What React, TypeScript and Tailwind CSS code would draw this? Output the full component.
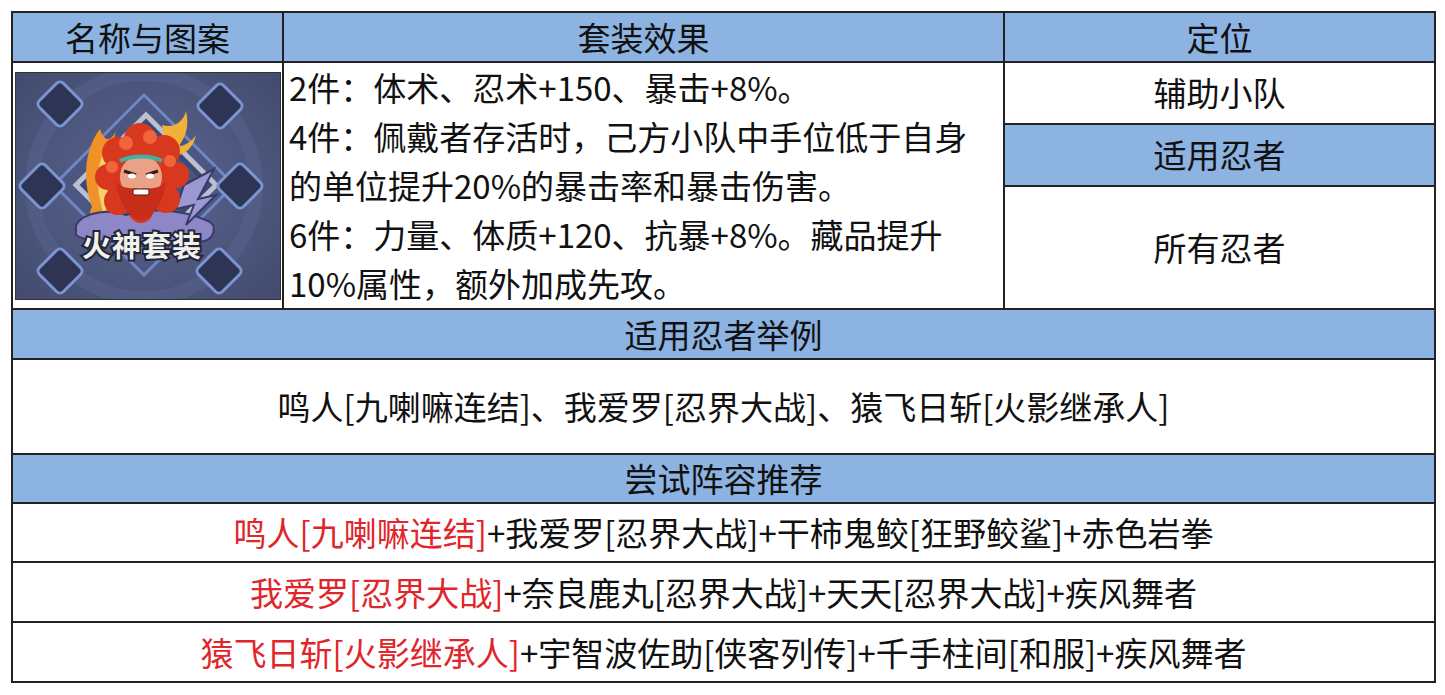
import React from "react";

const Emblem = () => {
  const small = [
    [44, 31],
    [204, 33],
    [26, 113],
    [224, 113],
    [44, 198],
    [203, 198],
  ];
  return (
    <svg width="264" height="226" viewBox="0 0 264 226" className="block">
      <defs>
        <radialGradient id="bg" cx="50%" cy="50%" r="70%">
          <stop offset="0%" stopColor="#5a6590" />
          <stop offset="100%" stopColor="#434b6e" />
        </radialGradient>
      </defs>
      <rect x="0" y="0" width="264" height="226" fill="url(#bg)" />
      <circle cx="128" cy="113" r="112" fill="none" stroke="#56618a" strokeWidth="14" opacity="0.6" />
      <path d="M128 22 L218 112 L128 202 L38 112 Z" fill="#4c5781" stroke="#6f86c4" strokeWidth="3" />
      <path d="M130 42 L200 112 L130 182 L60 112 Z" fill="#3f4870" stroke="#b9c0d2" strokeWidth="5" />
      <path d="M130 52 L190 112 L130 172 L70 112 Z" fill="#4d5679" />
      {small.map(([x, y], i) => (
        <rect
          key={i}
          x={x - 17}
          y={y - 17}
          width="34"
          height="34"
          rx="5"
          transform={`rotate(45 ${x} ${y})`}
          fill="#2e3453"
          stroke="#7b94d2"
          strokeWidth="3"
        />
      ))}
      {/* flames */}
      <path d="M84 56 C66 80 68 112 76 134 C70 144 76 156 90 164 C86 144 98 132 94 112 C102 96 94 78 100 58 C94 70 88 68 84 56 Z" fill="#f0912a" />
      <path d="M88 78 C78 100 82 122 88 142 C92 126 102 110 98 96 C102 88 100 80 96 72 Z" fill="#f6d36a" />
      <path d="M146 52 C158 56 168 48 170 38 C174 56 168 66 162 74 C170 72 176 68 180 62 C176 80 162 86 150 80 Z" fill="#f2b23a" />
      {/* lower cloud */}
      <path d="M60 152 C68 138 96 136 110 142 C130 136 160 134 192 148 C202 152 198 166 188 168 C160 172 130 170 110 168 C90 170 68 168 60 162 Z" fill="#8d87c8" stroke="#3b3a66" strokeWidth="2" />
      <path d="M168 112 L198 96 L182 126 L200 122 L170 152 L178 132 L160 136 Z" fill="#9b98d4" stroke="#3b3a66" strokeWidth="2" />
      {/* hair */}
      <g fill="#d8391e">
        <circle cx="125" cy="102" r="37" />
        <circle cx="102" cy="80" r="16" />
        <circle cx="124" cy="66" r="16" />
        <circle cx="148" cy="78" r="16" />
        <circle cx="160" cy="102" r="13" />
        <circle cx="92" cy="104" r="13" />
        <circle cx="102" cy="128" r="14" />
        <circle cx="150" cy="126" r="14" />
        <circle cx="125" cy="138" r="12" />
      </g>
      <g fill="#f0653a">
        <circle cx="110" cy="70" r="7" />
        <circle cx="134" cy="64" r="7" />
        <circle cx="154" cy="88" r="6" />
        <circle cx="96" cy="94" r="6" />
      </g>
      {/* face */}
      <ellipse cx="125" cy="104" rx="21" ry="22" fill="#e9a287" />
      <path d="M104 88 C115 82 135 82 146 88" stroke="#3fb0a4" strokeWidth="4" fill="none" />
      <path d="M108 98 L120 102 M142 98 L130 102" stroke="#3a1a10" strokeWidth="3" />
      <ellipse cx="116" cy="103" rx="4" ry="2.5" fill="#fff" />
      <ellipse cx="134" cy="103" rx="4" ry="2.5" fill="#fff" />
      {/* beard */}
      <path d="M100 108 C102 130 114 146 125 148 C136 146 148 130 150 108 C142 118 132 114 125 116 C118 114 108 118 100 108 Z" fill="#c82d19" />
      <rect x="117" y="116" width="16" height="6" rx="2" fill="#fff" stroke="#5a1a10" strokeWidth="1" />
      <text
        x="126"
        y="184"
        textAnchor="middle"
        fontSize="29"
        fontWeight="700"
        fontFamily="'Noto Sans CJK SC', sans-serif"
        fill="#f1f1ea"
        stroke="#22253a"
        strokeWidth="4"
        paintOrder="stroke"
        letterSpacing="1"
      >
        火神套装
      </text>
    </svg>
  );
};

const cell = "border-2 border-[#222222] p-0";

export default function App() {
  return (
    <div className="w-[1445px] h-[695px] bg-white pt-[11px] pl-[11px] font-['Noto_Sans_CJK_SC',sans-serif] text-[33px] text-[#111111] leading-none">
      <table className="border-collapse table-fixed w-[1423px]">
        <colgroup>
          <col className="w-[271px]" />
          <col className="w-[721px]" />
          <col className="w-[431px]" />
        </colgroup>
        <tbody>
          <tr className="h-[50px]">
            <td className={`${cell} bg-[#8db3e2] text-center`}>名称与图案</td>
            <td className={`${cell} bg-[#8db3e2] text-center`}>套装效果</td>
            <td className={`${cell} bg-[#8db3e2] text-center`}>定位</td>
          </tr>
          <tr className="h-[61px]">
            <td rowSpan={3} className={`${cell} align-middle`}>
              <div className="flex justify-center">
                <div className="border border-[#333333]">
                  <Emblem />
                </div>
              </div>
            </td>
            <td rowSpan={3} className={`${cell} align-middle pl-[5px]`}>
              <div className="flex flex-col leading-[49px] whitespace-nowrap">
                <div>2件：体术、忍术+150、暴击+8%。</div>
                <div>4件：佩戴者存活时，己方小队中手位低于自身</div>
                <div>的单位提升20%的暴击率和暴击伤害。</div>
                <div>6件：力量、体质+120、抗暴+8%。藏品提升</div>
                <div>10%属性，额外加成先攻。</div>
              </div>
            </td>
            <td className={`${cell} text-center`}>辅助小队</td>
          </tr>
          <tr className="h-[61px]">
            <td className={`${cell} bg-[#8db3e2] text-center`}>适用忍者</td>
          </tr>
          <tr className="h-[122px]">
            <td className={`${cell} text-center`}>所有忍者</td>
          </tr>
          <tr className="h-[50px]">
            <td colSpan={3} className={`${cell} bg-[#8db3e2] text-center`}>适用忍者举例</td>
          </tr>
          <tr className="h-[95px]">
            <td colSpan={3} className={`${cell} text-center`}>
              鸣人[九喇嘛连结]、我爱罗[忍界大战]、猿飞日斩[火影继承人]
            </td>
          </tr>
          <tr className="h-[49px]">
            <td colSpan={3} className={`${cell} bg-[#8db3e2] text-center`}>尝试阵容推荐</td>
          </tr>
          <tr className="h-[59px]">
            <td colSpan={3} className={`${cell} text-center`}>
              <span className="text-[#e0262b]">鸣人[九喇嘛连结]</span>+我爱罗[忍界大战]+干柿鬼鲛[狂野鲛鲨]+赤色岩拳
            </td>
          </tr>
          <tr className="h-[60px]">
            <td colSpan={3} className={`${cell} text-center`}>
              <span className="text-[#e0262b]">我爱罗[忍界大战]</span>+奈良鹿丸[忍界大战]+天天[忍界大战]+疾风舞者
            </td>
          </tr>
          <tr className="h-[60px]">
            <td colSpan={3} className={`${cell} text-center`}>
              <span className="text-[#e0262b]">猿飞日斩[火影继承人]</span>+宇智波佐助[侠客列传]+千手柱间[和服]+疾风舞者
            </td>
          </tr>
        </tbody>
      </table>
    </div>
  );
}
